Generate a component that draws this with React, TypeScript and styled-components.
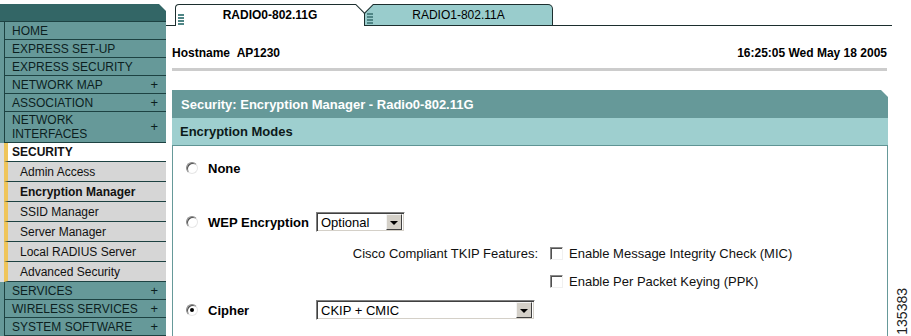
import React from "react"
import styled, { createGlobalStyle } from "styled-components"

const GlobalStyle = createGlobalStyle`
  html, body {
    margin: 0;
    padding: 0;
    background: #fff;
  }
  body {
    font-family: "Liberation Sans", Arial, sans-serif;
    color: #000;
  }
`

type Kind = "main" | "section" | "sub"

interface MenuItem {
  label: string
  kind: Kind
  plus?: boolean
  active?: boolean
  tall?: boolean
}

const menu: MenuItem[] = [
  { label: "HOME", kind: "main" },
  { label: "EXPRESS SET-UP", kind: "main" },
  { label: "EXPRESS SECURITY", kind: "main" },
  { label: "NETWORK MAP", kind: "main", plus: true },
  { label: "ASSOCIATION", kind: "main", plus: true },
  { label: "NETWORK INTERFACES", kind: "main", plus: true, tall: true },
  { label: "SECURITY", kind: "section" },
  { label: "Admin Access", kind: "sub" },
  { label: "Encryption Manager", kind: "sub", active: true },
  { label: "SSID Manager", kind: "sub" },
  { label: "Server Manager", kind: "sub" },
  { label: "Local RADIUS Server", kind: "sub" },
  { label: "Advanced Security", kind: "sub" },
  { label: "SERVICES", kind: "main", plus: true },
  { label: "WIRELESS SERVICES", kind: "main", plus: true },
  { label: "SYSTEM SOFTWARE", kind: "main", plus: true },
]

const DARK_LINE = "#1d4242"
const TEAL = "#669999"
const TEAL_DARK = "#336666"
const TEAL_LIGHT = "#99cccc"

const Page = styled.div`
  display: flex;
  width: 911px;
  height: 336px;
  overflow: hidden;
  background: #fff;
`

const Side = styled.nav`
  width: 166px;
  flex-shrink: 0;
  padding-top: 4px;
  display: flex;
  flex-direction: column;
`

const SideHead = styled.div`
  height: 18px;
  background: ${TEAL_DARK};
  border-bottom: 1px solid ${DARK_LINE};
  clip-path: polygon(0 0, 159px 0, 166px 7px, 166px 100%, 0 100%);
`

const Item = styled.div`
  display: flex;
`

const Gutter = styled.div<{ $kind: Kind }>`
  width: 4px;
  flex-shrink: 0;
  background: ${p => (p.$kind === "main" ? TEAL : "#dedede")};
`

const ItemBody = styled.div<{ $kind: Kind; $tall?: boolean; $active?: boolean }>`
  flex: 1;
  display: flex;
  align-items: center;
  justify-content: space-between;
  box-sizing: border-box;
  height: ${p => (p.$tall ? 31 : p.$kind === "main" ? 18 : p.$kind === "section" ? 19 : 20)}px;
  border-bottom: 1px solid ${DARK_LINE};
  border-left: ${p => (p.$kind === "main" ? `1px solid ${DARK_LINE}` : "4px solid #efc55a")};
  padding: 0 8px 0 ${p => (p.$kind === "main" ? 7 : p.$kind === "section" ? 4 : 12)}px;
  background: ${p => (p.$kind === "main" ? TEAL : p.$kind === "section" ? "#fff" : "#d6d6d6")};
  font-size: 12px;
  line-height: 14px;
  font-weight: ${p => (p.$kind === "section" || p.$active ? "bold" : "normal")};
  color: ${p => (p.$kind === "main" ? "#0c1f1f" : "#111")};
`

const ItemLabel = styled.span<{ $tall?: boolean }>`
  max-width: ${p => (p.$tall ? "80px" : "none")};
  white-space: ${p => (p.$tall ? "normal" : "nowrap")};
`

const Plus = styled.span`
  font-size: 13px;
`

const Main = styled.main`
  flex: 1;
  display: flex;
  flex-direction: column;
  min-width: 0;
`

const TabStrip = styled.div`
  display: flex;
  align-items: flex-end;
  height: 26px;
  box-sizing: border-box;
  padding: 4px 0 0 9px;
  border-bottom: 1px solid #1c2e2e;
`

const Tab = styled.div<{ $active?: boolean }>`
  position: relative;
  display: flex;
  align-items: center;
  width: ${p => (p.$active ? 190 : 189)}px;
  height: ${p => (p.$active ? 22 : 21)}px;
  margin-bottom: ${p => (p.$active ? -1 : 0)}px;
  margin-left: ${p => (p.$active ? 0 : -1)}px;
  padding-left: 3px;
  box-sizing: border-box;
  background: #1c2e2e;
  border-top-left-radius: ${p => (p.$active ? 4 : 0)}px;
  border-top-right-radius: ${p => (p.$active ? 0 : 5)}px;
  clip-path: ${p =>
    p.$active
      ? "polygon(0 0, calc(100% - 9px) 0, 100% 9px, 100% 100%, 0 100%)"
      : "polygon(9px 0, 100% 0, 100% 100%, 0 100%, 0 9px)"};
  z-index: ${p => (p.$active ? 2 : 1)};

  &::before {
    content: "";
    position: absolute;
    inset: 1px 1px 0 1px;
    background: ${p => (p.$active ? "#fff" : TEAL_LIGHT)};
    border-top-left-radius: ${p => (p.$active ? 3 : 0)}px;
    border-top-right-radius: ${p => (p.$active ? 0 : 4)}px;
    clip-path: ${p =>
      p.$active
        ? "polygon(0 0, calc(100% - 8.4px) 0, 100% 8.4px, 100% 100%, 0 100%)"
        : "polygon(8.4px 0, 100% 0, 100% 100%, 0 100%, 0 8.4px)"};
  }
`

const GripIcon = styled.svg`
  position: relative;
  align-self: flex-end;
  margin-bottom: 1px;
  flex-shrink: 0;
`

const TabLabel = styled.span<{ $active?: boolean }>`
  position: relative;
  flex: 1;
  text-align: center;
  padding-right: 9px;
  font-size: 12px;
  font-weight: ${p => (p.$active ? "bold" : "normal")};
  color: #000;
`

const InfoBar = styled.div`
  display: flex;
  justify-content: space-between;
  margin: 19px 5px 0 6px;
  font-size: 12px;
  font-weight: bold;
  line-height: 16px;
`

const Rule = styled.div`
  height: 3px;
  margin: 7px 5px 0 6px;
  background: #cccccc;
`

const Panel = styled.section`
  flex: 1;
  display: flex;
  flex-direction: column;
  margin: 19px 4px 0 6px;
`

const PanelTitle = styled.div`
  height: 28px;
  display: flex;
  align-items: center;
  padding-left: 9px;
  background: ${TEAL};
  color: #fff;
  font-size: 13px;
  font-weight: bold;
  clip-path: polygon(0 0, calc(100% - 7px) 0, 100% 7px, 100% 100%, 0 100%);
`

const PanelSub = styled.div`
  height: 28px;
  box-sizing: border-box;
  display: flex;
  align-items: center;
  padding-left: 8px;
  background: #9ecfcf;
  border-bottom: 1px solid #5f9494;
  color: #0c1a1a;
  font-size: 13px;
  font-weight: bold;
`

const PanelBody = styled.div`
  flex: 1;
  padding-left: 13px;
  border-left: 1px solid ${TEAL};
  border-right: 1px solid ${TEAL};
`

const Row = styled.div<{ $top: number }>`
  display: grid;
  grid-template-columns: 22px 108px 222px 12px 1fr;
  align-items: center;
  height: 20px;
  margin-top: ${p => p.$top}px;
`

const Radio = styled.span<{ $checked?: boolean }>`
  grid-column: 1;
  display: flex;
  align-items: center;
  justify-content: center;
  width: 12px;
  height: 12px;
  box-sizing: border-box;
  border-radius: 50%;
  border: 1px solid;
  border-color: #8a8a8a #e6e6e6 #e6e6e6 #8a8a8a;
  background: #fff;
  box-shadow: inset 1px 1px 0 #505050;

  &::after {
    content: "";
    display: ${p => (p.$checked ? "block" : "none")};
    width: 4px;
    height: 4px;
    border-radius: 50%;
    background: #000;
  }
`

const OptionLabel = styled.span`
  grid-column: 2;
  font-size: 13px;
  font-weight: bold;
  white-space: nowrap;
`

const FeatureLabel = styled.span`
  grid-column: 3;
  justify-self: end;
  font-size: 13px;
  color: #111;
  white-space: nowrap;
`

const Select = styled.div<{ $width: number }>`
  grid-column: 3;
  display: flex;
  align-items: center;
  justify-content: space-between;
  width: ${p => p.$width}px;
  height: 20px;
  box-sizing: border-box;
  border: 1px solid;
  border-color: #808080 #fff #fff #808080;
  box-shadow: inset 1px 1px 0 #404040, inset -1px -1px 0 #d4d0c8;
  background: #fff;
  padding: 2px 2px 2px 4px;
  font-size: 13px;
  color: #000;
`

const SelectButton = styled.span`
  width: 16px;
  height: 16px;
  box-sizing: border-box;
  display: flex;
  align-items: center;
  justify-content: center;
  background: #d4d0c8;
  border: 1px solid;
  border-color: #f4f4f4 #404040 #404040 #f4f4f4;

  &::after {
    content: "";
    border-left: 4px solid transparent;
    border-right: 4px solid transparent;
    border-top: 4px solid #000;
    margin-top: 1px;
  }
`

const CheckOption = styled.label`
  grid-column: 5;
  display: flex;
  align-items: center;
  gap: 6px;
  font-size: 13px;
  color: #111;
  white-space: nowrap;
`

const Checkbox = styled.span`
  width: 13px;
  height: 13px;
  box-sizing: border-box;
  border: 1px solid;
  border-color: #8a8a8a #f0f0f0 #f0f0f0 #8a8a8a;
  box-shadow: inset 1px 1px 0 #505050;
  background: #fff;
`

const Aside = styled.aside`
  width: 19px;
  flex-shrink: 0;
  display: flex;
  flex-direction: column;
  justify-content: flex-end;
  align-items: center;
`

const FigureId = styled.span`
  writing-mode: vertical-rl;
  transform: rotate(180deg);
  font-size: 14px;
  color: #222;
  padding-top: 1px;
`

const Grip = () => (
  <GripIcon width="6" height="11" viewBox="0 0 6 11">
    {[0, 3, 6, 9].map(y => (
      <rect key={y} x="0" y={y} width="6" height="2" fill="#4f8585" />
    ))}
  </GripIcon>
)

const App = () => (
  <>
    <GlobalStyle />
    <Page>
      <Side>
        <SideHead />
        {menu.map(item => (
          <Item key={item.label}>
            <Gutter $kind={item.kind} />
            <ItemBody $kind={item.kind} $tall={item.tall} $active={item.active}>
              <ItemLabel $tall={item.tall}>{item.label}</ItemLabel>
              {item.plus && <Plus>+</Plus>}
            </ItemBody>
          </Item>
        ))}
      </Side>
      <Main>
        <TabStrip>
          <Tab $active>
            <Grip />
            <TabLabel $active>RADIO0-802.11G</TabLabel>
          </Tab>
          <Tab>
            <Grip />
            <TabLabel>RADIO1-802.11A</TabLabel>
          </Tab>
        </TabStrip>
        <InfoBar>
          <span>Hostname&nbsp;&nbsp;AP1230</span>
          <span>16:25:05 Wed May 18 2005</span>
        </InfoBar>
        <Rule />
        <Panel>
          <PanelTitle>Security: Encryption Manager - Radio0-802.11G</PanelTitle>
          <PanelSub>Encryption Modes</PanelSub>
          <PanelBody>
            <Row $top={12}>
              <Radio />
              <OptionLabel>None</OptionLabel>
            </Row>
            <Row $top={34}>
              <Radio />
              <OptionLabel>WEP Encryption</OptionLabel>
              <Select $width={89}>
                Optional
                <SelectButton />
              </Select>
            </Row>
            <Row $top={11}>
              <FeatureLabel>Cisco Compliant TKIP Features:</FeatureLabel>
              <CheckOption>
                <Checkbox />
                Enable Message Integrity Check (MIC)
              </CheckOption>
            </Row>
            <Row $top={8}>
              <CheckOption>
                <Checkbox />
                Enable Per Packet Keying (PPK)
              </CheckOption>
            </Row>
            <Row $top={9}>
              <Radio $checked />
              <OptionLabel>Cipher</OptionLabel>
              <Select $width={219}>
                CKIP + CMIC
                <SelectButton />
              </Select>
            </Row>
          </PanelBody>
        </Panel>
      </Main>
      <Aside>
        <FigureId>135383</FigureId>
      </Aside>
    </Page>
  </>
)

export default App
